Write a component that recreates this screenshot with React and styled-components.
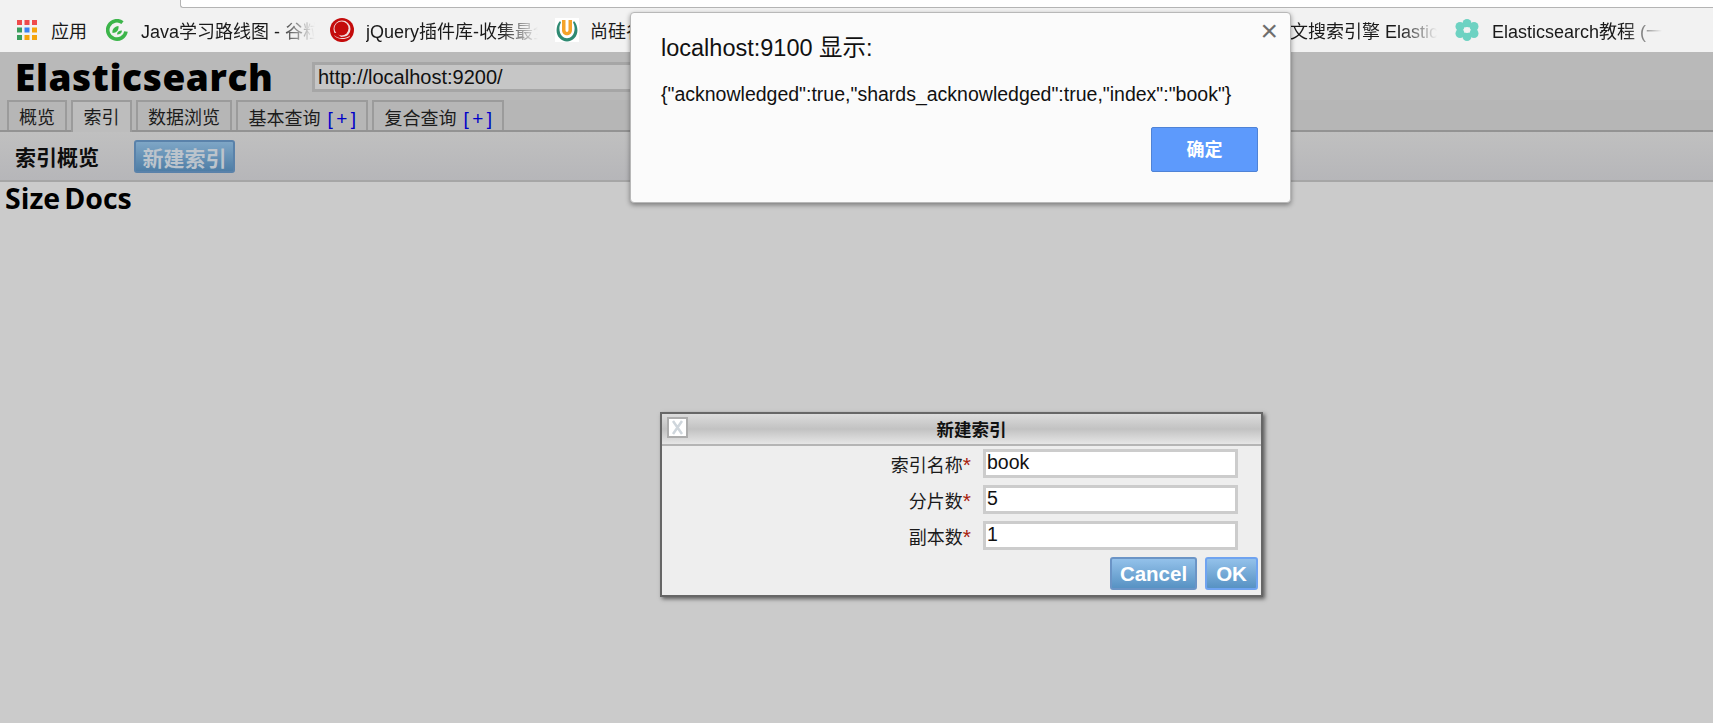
import React from 'react'
import styled, { createGlobalStyle } from 'styled-components'

const sans = '"Liberation Sans", "Noto Sans CJK SC", sans-serif'

const GlobalStyle = createGlobalStyle`
	html, body {
		margin: 0;
		padding: 0;
		background: #cbcbcb;
		font-family: ${sans};
	}
`

const Page = styled.div`
	position: relative;
	width: 1713px;
	height: 723px;
	overflow: hidden;
	background: #cbcbcb;
`

const AddressStrip = styled.div`
	height: 8px;
	padding-left: 180px;
	background: #f2f2f2;
`

const AddressBox = styled.div`
	box-sizing: border-box;
	height: 8px;
	background: #fff;
	border-left: 1px solid #b4b4b4;
	border-bottom: 1px solid #b4b4b4;
	border-bottom-left-radius: 3px;
`

const BookmarkBar = styled.div`
	display: flex;
	align-items: center;
	height: 44px;
	padding: 0 0 0 17px;
	background: #f2f2f2;
`

const Bookmark = styled.div`
	display: flex;
	align-items: center;
	gap: ${(p) => p.$gap || 13}px;
	flex: 0 0 ${(p) => p.$width}px;
	width: ${(p) => p.$width}px;
	height: 100%;
	overflow: hidden;
`

const BookmarkText = styled.span`
	flex: 0 0 auto;
	width: ${(p) => (p.$width ? `${p.$width}px` : 'auto')};
	overflow: hidden;
	white-space: nowrap;
	font-size: 18px;
	color: #1a1a1a;
	${(p) => p.$width && `
		mask-image: linear-gradient(to right, #000 78%, transparent 100%);
	`}
`

const IconSlot = styled.span`
	flex: 0 0 24px;
`

const Header = styled.div`
	display: flex;
	align-items: flex-start;
	height: 48px;
	padding-left: 15px;
	background: #b9b9b9;
`

const Logo = styled.h1`
	margin: 0;
	width: 297px;
	font: 800 37px/50px "Open Sans", sans-serif;
	letter-spacing: 0.6px;
	color: #000;
`

const ClusterInput = styled.input`
	box-sizing: border-box;
	width: 800px;
	height: 30px;
	margin-top: 10px;
	padding: 0 3px;
	border: 3px solid #a6a6a6;
	background: #c6c6c6;
	font: 20px ${sans};
	color: #111;
`

const Health = styled.div`
	flex: 0 0 auto;
	width: 30px;
	height: 25px;
	margin: 10px 0 0 136px;
	background: #006400;
`

const TabRow = styled.div`
	display: flex;
	gap: 4px;
	box-sizing: border-box;
	height: 32px;
	padding-left: 7px;
	background: #b6b6b6;
	border-bottom: 2px solid #939393;
`

const Tab = styled.div`
	box-sizing: border-box;
	width: ${(p) => p.$width}px;
	height: ${(p) => (p.$active ? 32 : 30)}px;
	border: 2px solid #9b9b9b;
	border-bottom: none;
	background: ${(p) => (p.$active ? '#bdbdbd' : '#b6b6b6')};
	text-align: center;
	font-size: 18px;
	line-height: 33px;
	white-space: nowrap;
	color: #1c1c1c;
	position: relative;
	z-index: ${(p) => (p.$active ? 1 : 0)};
`

const Plus = styled.span`
	margin: 0 -4px 0 2px;
	font-size: 19px;
	color: #0000c8;
	letter-spacing: 3.5px;
`

const Toolbar = styled.div`
	display: flex;
	align-items: center;
	gap: 35px;
	box-sizing: border-box;
	height: 50px;
	padding: 0 0 0 15px;
	background: linear-gradient(#c0c0c0, #b6b6b9);
	border-bottom: 2px solid #a6a6a6;
`

const ToolbarTitle = styled.span`
	font-size: 21px;
	font-weight: 700;
	color: #0d0d0d;
`

const CreateButton = styled.button`
	box-sizing: border-box;
	width: 101px;
	height: 33px;
	padding: 0;
	border: 2px solid #5a82aa;
	border-radius: 3px;
	background: linear-gradient(#7ea6c6, #4f7ea6);
	font: 700 21px ${sans};
	color: #bcc4cc;
`

const StatsRow = styled.div`
	display: flex;
	gap: 4px;
	padding: 0 0 0 5px;
	font: 700 28.5px/32px "Open Sans", sans-serif;
	color: #000;
`

const Alert = styled.div`
	position: absolute;
	left: 630px;
	top: 12px;
	box-sizing: border-box;
	width: 661px;
	height: 191px;
	padding: 21px 30px 0;
	background: #fbfbfb;
	border: 1px solid #b8b8b8;
	border-radius: 4px;
	box-shadow: 0 2px 5px rgba(0, 0, 0, 0.4);
`

const AlertClose = styled.span`
	position: absolute;
	top: 3px;
	right: 12px;
	font: 400 30px/30px ${sans};
	color: #6e6e6e;
`

const AlertTitle = styled.div`
	font-size: 23.5px;
	line-height: 28px;
	color: #111;
`

const AlertMessage = styled.div`
	margin-top: 20px;
	font-size: 19.5px;
	line-height: 24px;
	white-space: nowrap;
	color: #111;
`

const AlertActions = styled.div`
	display: flex;
	justify-content: flex-end;
	margin-top: 21px;
	margin-right: 2px;
`

const AlertButton = styled.button`
	box-sizing: border-box;
	width: 107px;
	height: 45px;
	padding: 0 0 4px;
	border: 1px solid #4f83d6;
	border-radius: 2px;
	background: #5d9afc;
	font: 700 18px ${sans};
	color: #fff;
`

const Dialog = styled.div`
	position: absolute;
	left: 660px;
	top: 412px;
	box-sizing: border-box;
	width: 603px;
	height: 185px;
	border: 2px solid #666;
	background: #eee;
	box-shadow: 2px 2px 4px rgba(0, 0, 0, 0.55);
`

const DialogHead = styled.div`
	position: relative;
	box-sizing: border-box;
	height: 32px;
	padding-left: 20px;
	border-bottom: 2px solid #b5b5b5;
	background: linear-gradient(#dcdcdc, #c2c2c2 50%, #e6e6e6);
	text-align: center;
	font-size: 17.5px;
	font-weight: 700;
	line-height: 33px;
	color: #111;
`

const DialogClose = styled.span`
	position: absolute;
	left: 5px;
	top: 3px;
	box-sizing: border-box;
	display: flex;
	width: 21px;
	height: 21px;
	align-items: center;
	justify-content: center;
	border: 2px solid #adadad;
	background: #fff;
`

const DialogBody = styled.div`
	display: flex;
	flex-direction: column;
	gap: 7px;
	padding-top: 3px;
`

const FormRow = styled.div`
	display: grid;
	grid-template-columns: 309px 255px;
	column-gap: 12px;
	align-items: center;
`

const FormLabel = styled.label`
	text-align: right;
	font-size: 18px;
	color: #1a1a1a;
`

const Required = styled.span`
	font-size: 21px;
	line-height: 18px;
	color: #a8200d;
`

const FormInput = styled.input`
	box-sizing: border-box;
	width: 255px;
	height: 29px;
	padding: 0 1px 3px;
	border: 3px solid #ccc;
	background: #fff;
	font: 19.5px ${sans};
	color: #111;
`

const DialogActions = styled.div`
	display: flex;
	justify-content: flex-end;
	gap: 8px;
	padding: 0 3px 0 0;
`

const ActionButton = styled.button`
	box-sizing: border-box;
	width: ${(p) => p.$width}px;
	height: 33px;
	padding: 0;
	border: 2px solid ${(p) => (p.$focus ? '#6fa3f0' : '#6b94c6')};
	border-radius: 3px;
	background: linear-gradient(#93c1ea, #5792c3);
	font: 700 20.5px ${sans};
	color: #fff;
`

const AppsIcon = () => (
	<svg width='20' height='20' viewBox='0 0 20 20'>
		{['#ef4b4b', '#ef4b4b', '#ef4b4b', '#3a9e5c', '#3b82f0', '#f5a40c', '#3a9e5c', '#f5a40c', '#f5a40c'].map((c, i) => (
			<rect key={i} x={(i % 3) * 7.5} y={Math.floor(i / 3) * 7.5} width='5' height='5' fill={c} />
		))}
	</svg>
)

const LeafIcon = () => (
	<svg width='22' height='22' viewBox='0 0 22 22'>
		<path d='M16.5 3.6A9.2 9.2 0 1 0 20 12.5' fill='none' stroke='#3cb54a' strokeWidth='3.6' />
		<path d='M6.5 14c-.5-4 2-6.500 6-7 .5 4-1.500 7-6 7zM11 15.500c0-2.500 2-4 5-4 0 2.500-2 4-5 4z' fill='#3cb54a' />
	</svg>
)

const JqueryIcon = () => (
	<svg width='24' height='24' viewBox='0 0 24 24'>
		<circle cx='12' cy='12' r='12' fill='#c40b0b' />
		<circle cx='12' cy='11' r='8.500' fill='#f2dcdc' />
		<path d='M2 15h5l4 4 8-1 3-3-2 6-8 3-8-3z' fill='#c40b0b' />
		<circle cx='11.500' cy='10.500' r='7' fill='#c40b0b' />
		<path d='M4 17c3 3.500 11 4.500 16 .5l-.5 1.500c-5 3-11 2.500-14.500-.5z' fill='#f0dede' />
	</svg>
)

const AtguiguIcon = () => (
	<svg width='24' height='24' viewBox='0 0 24 24'>
		<rect width='24' height='24' fill='#fff' />
		<path d='M5 3C.5 8 .5 16 4.500 20c4 4.500 11 4.500 15 0 4-4 4-12-.5-17l-1 1.500c2.500 4 2 10.500-1 13.500-3 3-7 3-10 0-3-3-3.500-9.500-1-13.500z' fill='#2f8a72' />
		<path d='M7 2h3.500v10c0 2.500 3 2.500 3 0V2H17v10c0 7-10 7-10 0z' fill='#f5a32a' />
	</svg>
)

const FlowerIcon = () => (
	<svg width='24' height='22' viewBox='0 0 24 22'>
		<g fill='#6dd2c2'>
			<circle cx='12' cy='4.500' r='4.500' />
			<circle cx='12' cy='17.500' r='4.500' />
			<circle cx='5' cy='7.500' r='4.500' />
			<circle cx='19' cy='7.500' r='4.500' />
			<circle cx='5' cy='14.500' r='4.500' />
			<circle cx='19' cy='14.500' r='4.500' />
		</g>
		<circle cx='12' cy='11' r='3' fill='#f2f2f2' />
	</svg>
)

const CloseGlyph = () => (
	<svg width='13' height='15' viewBox='0 0 13 15'>
		<path d='M2 1l9 13M11 1L2 14' stroke='#cfd6dc' strokeWidth='2.500' fill='none' />
	</svg>
)

const App = () => (
	<Page>
		<GlobalStyle />
		<AddressStrip>
			<AddressBox />
		</AddressStrip>
		<BookmarkBar>
			<Bookmark $width={89} $gap={14}>
				<AppsIcon />
				<BookmarkText>应用</BookmarkText>
			</Bookmark>
			<Bookmark $width={224}>
				<LeafIcon />
				<BookmarkText $width={174}>Java学习路线图 - 谷粒学院</BookmarkText>
			</Bookmark>
			<Bookmark $width={225} $gap={12}>
				<JqueryIcon />
				<BookmarkText $width={172}>jQuery插件库-收集最全</BookmarkText>
			</Bookmark>
			<Bookmark $width={680} $gap={11}>
				<AtguiguIcon />
				<BookmarkText>尚硅谷</BookmarkText>
			</Bookmark>
			<Bookmark $width={220}>
				<IconSlot />
				<BookmarkText $width={165}>全文搜索引擎 Elasticsearch</BookmarkText>
			</Bookmark>
			<Bookmark $width={240}>
				<FlowerIcon />
				<BookmarkText $width={170}>Elasticsearch教程 (一)</BookmarkText>
			</Bookmark>
		</BookmarkBar>
		<Header>
			<Logo>Elasticsearch</Logo>
			<ClusterInput readOnly value='http://localhost:9200/' />
			<Health />
		</Header>
		<TabRow>
			<Tab $width={60}>概览</Tab>
			<Tab $width={61} $active>索引</Tab>
			<Tab $width={96}>数据浏览</Tab>
			<Tab $width={132}>基本查询 <Plus>[+]</Plus></Tab>
			<Tab $width={132}>复合查询 <Plus>[+]</Plus></Tab>
		</TabRow>
		<Toolbar>
			<ToolbarTitle>索引概览</ToolbarTitle>
			<CreateButton>新建索引</CreateButton>
		</Toolbar>
		<StatsRow>
			<span>Size</span>
			<span>Docs</span>
		</StatsRow>
		<Alert>
			<AlertClose>×</AlertClose>
			<AlertTitle>localhost:9100 显示:</AlertTitle>
			<AlertMessage>{'{"acknowledged":true,"shards_acknowledged":true,"index":"book"}'}</AlertMessage>
			<AlertActions>
				<AlertButton>确定</AlertButton>
			</AlertActions>
		</Alert>
		<Dialog>
			<DialogHead>
				<DialogClose><CloseGlyph /></DialogClose>
				新建索引
			</DialogHead>
			<DialogBody>
				<FormRow>
					<FormLabel>索引名称<Required>*</Required></FormLabel>
					<FormInput readOnly value='book' />
				</FormRow>
				<FormRow>
					<FormLabel>分片数<Required>*</Required></FormLabel>
					<FormInput readOnly value='5' />
				</FormRow>
				<FormRow>
					<FormLabel>副本数<Required>*</Required></FormLabel>
					<FormInput readOnly value='1' />
				</FormRow>
				<DialogActions>
					<ActionButton $width={87}>Cancel</ActionButton>
					<ActionButton $width={53} $focus>OK</ActionButton>
				</DialogActions>
			</DialogBody>
		</Dialog>
	</Page>
)

export default App
